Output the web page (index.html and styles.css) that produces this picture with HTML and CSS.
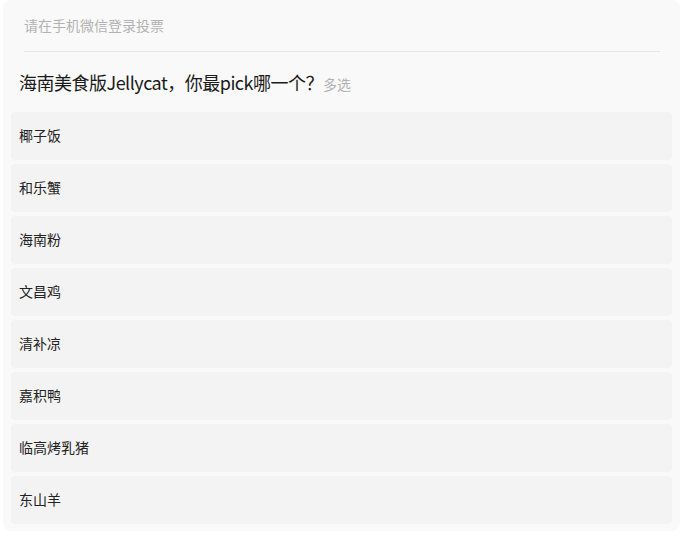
FILE: index.html
```html
<!DOCTYPE html>
<html lang="zh-CN">
<head>
    <meta charset="UTF-8">
    <meta name="viewport" content="width=device-width, initial-scale=1.0">
    <title>投票</title>
    <link rel="stylesheet" href="styles.css">
</head>
<body>
    <div class="vote-card">
        <div class="login-tip">请在手机微信登录投票</div>
        <div class="question">
            海南美食版Jellycat，你最pick哪一个？<span class="question-type">多选</span>
        </div>
        <ul class="options">
            <li class="option">椰子饭</li>
            <li class="option">和乐蟹</li>
            <li class="option">海南粉</li>
            <li class="option">文昌鸡</li>
            <li class="option">清补凉</li>
            <li class="option">嘉积鸭</li>
            <li class="option">临高烤乳猪</li>
            <li class="option">东山羊</li>
        </ul>
    </div>
</body>
</html>
```

FILE: styles.css
```css
body {
    margin: 0;
    background: #fff;
    font-family: "Noto Sans CJK SC", "Noto Sans", sans-serif;
    color: #222;
}
.vote-card {
    margin: 0 4px 0 3px;
    padding: 0 8px 7px;
    background-color: #f9f9f9;
    border-radius: 8px;
}
.login-tip {
    margin: 0 12px 0 13px;
    padding: 15px 0 16px;
    line-height: 20px;
    font-size: 14px;
    color: #b2b2b2;
    border-bottom: 1px solid #e6e6e6;
}
.question {
    padding: 17px 8px 15px;
    line-height: 26px;
    font-size: 18px;
    letter-spacing: -0.5px;
    color: #1a1a1a;
}
.question-type {
    font-size: 14px;
    letter-spacing: 0;
    color: #b2b2b2;
}
.options {
    list-style: none;
    margin: 0;
    padding: 0;
    display: flex;
    flex-direction: column;
    gap: 4px;
}
.option {
    box-sizing: border-box;
    height: 48px;
    line-height: 46px;
    padding: 0 8px 2px;
    font-size: 14px;
    color: #222;
    background-color: #f3f3f3;
    border-radius: 4px;
}
```
